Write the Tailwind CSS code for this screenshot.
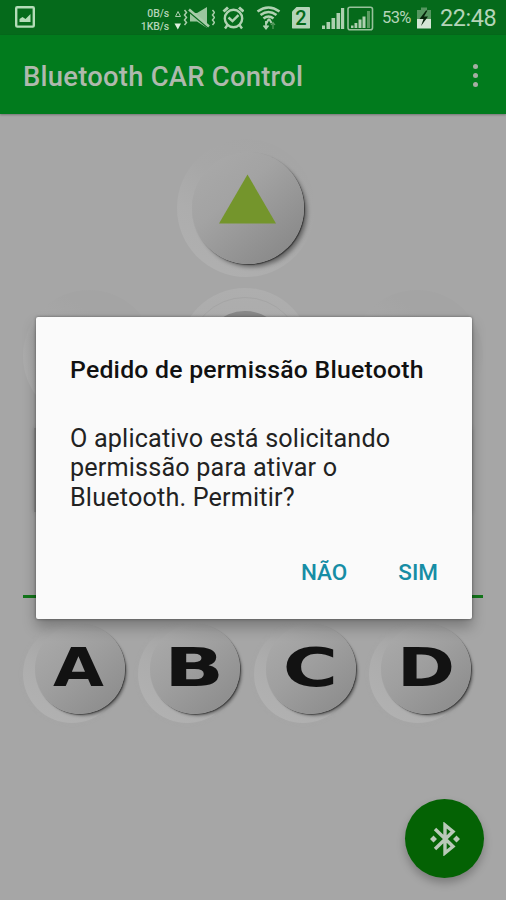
<!DOCTYPE html>
<html lang="pt-BR">
<head>
<meta charset="utf-8">
<meta name="viewport" content="width=device-width, initial-scale=1">
<title>Bluetooth CAR Control</title>
<script src="https://cdn.jsdelivr.net/npm/@tailwindcss/browser@4"></script>
</head>
<body class="bg-[#a6a6a6] font-[Roboto,'Noto_Sans',sans-serif]">
<div class="relative flex h-[900px] w-[506px] flex-col overflow-hidden bg-[#a6a6a6]">

  <!-- Status bar -->
  <header class="flex h-[35px] shrink-0 items-center bg-[#056a1b] text-[#b4d4b8]">
    <svg class="mb-[1px] ml-[15px] h-[22px] w-[20px] shrink-0" viewBox="0 0 20 22" fill="none" stroke="#b4dcb8"><rect x="1.2" y="1.2" width="17.6" height="19.400" rx="1" stroke-width="2.400"/><path d="M4.500 16v-3l3-2 3 2 5-5v8z" fill="#b4dcb8" stroke="none"/></svg>
    <div class="ml-[101px] w-[33px] shrink-0 pt-[4px] text-right text-[10.5px] leading-[13px] font-medium whitespace-nowrap tracking-[-0.1px]"><div>0B/s</div><div>1KB/s</div></div>
    <svg class="ml-[4px] h-[30px] w-[42px] shrink-0" viewBox="173 3 42 30" fill="none" stroke="#a8ccaa">
      <path d="M175.500 16.500l2.500-5 2.500 5z" stroke-width="1"/><path d="M174.500 23.500h6.500l-3.200 6z" fill="#e0f0e0" stroke="none"/>
      <path d="M184.500 10l2 2.500-2 2.500 2 2.500-2 2.500 2 2.500-2 2.500" stroke-width="1.500"/><path d="M212.500 10l2 2.500-2 2.500 2 2.500-2 2.500 2 2.500-2 2.500" stroke-width="1.500"/>
      <path d="M190 13h7l10-6v21l-10-6.500h-7z" fill="#9bc69f" stroke="none"/><path d="M189 11.500l19 16" stroke="#056a1b" stroke-width="2"/><path d="M189 9.500l20 17" stroke-width="2.600"/>
    </svg>
    <svg class="ml-[7px] h-[24px] w-[22px] shrink-0" viewBox="222 5 22 24" fill="none" stroke="#b0d2b2" stroke-width="2.400"><circle cx="233.500" cy="17.500" r="8.700"/><path d="M228.500 16.500l4 3.700 6-6"/><path d="M223.500 10.500l4.500-4M243.500 10.500l-4.500-4" stroke-width="3"/><path d="M227.500 24l-2.500 3.500M239.500 24l2.500 3.500"/></svg>
    <svg class="ml-[12px] h-[26px] w-[25px] shrink-0" viewBox="256 4 25 26" fill="none" stroke="#b0d2b2" stroke-width="2.600"><path d="M257.500 10.500q11-8 22 0M260.500 14q8-6 16 0M263.500 17.500q5-4 10 0"/><path d="M266 23l2.500-4.500h1l2 3.500" stroke-width="2"/><path d="M266 20v7M263.500 24.500l2.500 3 2.500-3" stroke-width="1.800"/><path d="M273 28v-6M271 24l2-2.500 2 2.500" stroke="#5b9d62" stroke-width="1.200"/></svg>
    <div class="ml-[11px] flex h-[22px] w-[18px] shrink-0 items-center justify-center rounded-[1px] bg-[#b4d4b8] text-[20px] font-medium text-[#056a1b] [clip-path:polygon(5px_0,100%_0,100%_100%,0_100%,0_5px)]">2</div>
    <svg class="ml-[11px] h-[26px] w-[53px] shrink-0" viewBox="321 4 53 26" fill="#aed0b0"><path d="M322 24.500h3v3.500h-3zM326.500 21h3.600v7h-3.600zM331.500 17h3.600v11h-3.600zM336.500 12h3.600v16h-3.600zM341 7h3.200v21H341z"/><rect x="348" y="6.200" width="24.500" height="22.500" rx="2" fill="none" stroke="#98c29c" stroke-width="1.600"/><path d="M351 24.500h2.500v2.500H351zM354.500 22h2.800v5h-2.800zM358.500 18.500h3V27h-3zM362.500 15.500h3V27h-3z"/><path d="M367 10h3v17h-3z" fill="#5a9c61"/></svg>
    <div class="ml-[8px] w-[32px] shrink-0 pt-[2px] text-[16.500px] tracking-[-0.6px]">53%</div>
    <svg class="ml-[3px] h-[22px] w-[14px] shrink-0" viewBox="417 6 14 22"><path d="M417 9h4V6.500h6V9h4v9h-14z" fill="#559760"/><path d="M417 18h14v9.500h-14z" fill="#d5e6d6"/><path d="M426 9.500l-6.500 8.500h4l-2.500 7 7-9.500h-4l3.500-6z" fill="#06240b"/></svg>
    <div class="ml-[9px] shrink-0 pt-[2px] text-[23.400px] leading-none tracking-[-0.4px]">22:48</div>
  </header>

  <!-- App bar -->
  <div class="flex h-[79px] shrink-0 items-center justify-between bg-[#017b1d] pl-[23px] shadow-[0_1px_2px_rgba(0,0,0,.3)]">
    <h1 class="pt-[7px] text-[27.400px] font-medium tracking-[0.250px] whitespace-nowrap text-[#afb9ad]">Bluetooth CAR Control</h1>
    <div class="mr-[28px] flex flex-col gap-[4px] pt-[2px]"><i class="size-[5px] rounded-full bg-[#a6aea4]"></i><i class="size-[5px] rounded-full bg-[#a6aea4]"></i><i class="size-[5px] rounded-full bg-[#a6aea4]"></i></div>
  </div>

  <!-- Controls -->
  <main class="flex flex-col pt-[25px]">
    <div class="ml-[177px] flex size-[138px] items-center rounded-full bg-[linear-gradient(35deg,#b1b1b1_0%,#adadad_32%,#a7a7a7_55%,#a4a4a4_100%)] pl-[15px]">
      <div class="flex size-[112px] items-center justify-center rounded-full bg-[linear-gradient(140deg,#a9a9a9_8%,#a3a3a3_38%,#868686_95%)] shadow-[1px_1px_1px_rgba(0,0,0,.45),4px_4px_4px_-1px_rgba(0,0,0,.4)]">
        <svg class="mb-[18px] ml-[-1px] h-[50px] w-[57px]" viewBox="0 0 58 50"><path d="M29 0l29 50H0z" fill="#74952c"/></svg>
      </div>
    </div>
    <div class="mt-[11px] flex h-[140px] items-start justify-between px-[23px]">
      <div class="mt-[2px] size-[132px] rounded-full bg-[linear-gradient(35deg,#b0b0b0,#a4a4a4_70%)]"></div>
      <div class="mr-[16px] flex size-[132px] items-center justify-center rounded-full bg-[linear-gradient(180deg,#aeaeae,#a6a6a6)]"><div class="flex size-[114px] items-center justify-center rounded-full border border-[#a5a5a5]"><div class="size-[86px] rounded-full bg-[#898989]"></div></div></div>
      <div class="mt-[2px] size-[132px] rounded-full bg-[linear-gradient(35deg,#b0b0b0,#a4a4a4_70%)]"></div>
    </div>
    <div class="mx-[34px] h-[84px] bg-[#8d8d8d] shadow-[0_0_5px_rgba(0,0,0,.15)]"></div>
    <div class="mx-[23px] mt-[83px] h-[3px] bg-[#12761a]"></div>
    <div class="mt-[27px] ml-[23px] flex gap-[17.300px]">
      <div class="flex size-[98px] items-center justify-end rounded-full bg-[linear-gradient(35deg,#b3b3b3_0%,#adadad_40%,#a6a6a6_62%)] pb-[11px] shadow-[0_0_4px_#aaaaaa40]"><div class="mr-[-4px] flex size-[90px] items-center justify-center rounded-full bg-[linear-gradient(140deg,#a9a9a9_10%,#9f9f9f_45%,#8b8b8b_95%)] shadow-[1px_1px_1px_rgba(0,0,0,.4),3px_3px_3px_-1px_rgba(0,0,0,.35)]"><span class="mb-[2px] ml-[-3px] inline-block scale-x-[1.240] font-['DejaVu_Sans',sans-serif] text-[53px] leading-none font-bold text-[#121212]">A</span></div></div>
      <div class="flex size-[98px] items-center justify-end rounded-full bg-[linear-gradient(35deg,#b3b3b3_0%,#adadad_40%,#a6a6a6_62%)] pb-[11px] shadow-[0_0_4px_#aaaaaa40]"><div class="mr-[-4px] flex size-[90px] items-center justify-center rounded-full bg-[linear-gradient(140deg,#a9a9a9_10%,#9f9f9f_45%,#8b8b8b_95%)] shadow-[1px_1px_1px_rgba(0,0,0,.4),3px_3px_3px_-1px_rgba(0,0,0,.35)]"><span class="mb-[2px] ml-[-3px] inline-block scale-x-[1.480] font-['DejaVu_Sans',sans-serif] text-[53px] leading-none font-bold text-[#121212]">B</span></div></div>
      <div class="flex size-[98px] items-center justify-end rounded-full bg-[linear-gradient(35deg,#b3b3b3_0%,#adadad_40%,#a6a6a6_62%)] pb-[11px] shadow-[0_0_4px_#aaaaaa40]"><div class="mr-[-4px] flex size-[90px] items-center justify-center rounded-full bg-[linear-gradient(140deg,#a9a9a9_10%,#9f9f9f_45%,#8b8b8b_95%)] shadow-[1px_1px_1px_rgba(0,0,0,.4),3px_3px_3px_-1px_rgba(0,0,0,.35)]"><span class="mb-[2px] inline-block scale-x-[1.420] font-['DejaVu_Sans',sans-serif] text-[53px] leading-none font-bold text-[#121212]">C</span></div></div>
      <div class="flex size-[98px] items-center justify-end rounded-full bg-[linear-gradient(35deg,#b3b3b3_0%,#adadad_40%,#a6a6a6_62%)] pb-[11px] shadow-[0_0_4px_#aaaaaa40]"><div class="mr-[-4px] flex size-[90px] items-center justify-center rounded-full bg-[linear-gradient(140deg,#a9a9a9_10%,#9f9f9f_45%,#8b8b8b_95%)] shadow-[1px_1px_1px_rgba(0,0,0,.4),3px_3px_3px_-1px_rgba(0,0,0,.35)]"><span class="mb-[2px] inline-block scale-x-[1.320] font-['DejaVu_Sans',sans-serif] text-[53px] leading-none font-bold text-[#121212]">D</span></div></div>
    </div>
  </main>

  <!-- Floating action button -->
  <button aria-label="Bluetooth" class="absolute top-[799px] left-[405px] flex size-[79px] items-center justify-center rounded-full bg-[#046204] shadow-[0_5px_8px_rgba(0,0,0,.25)]">
    <svg class="h-[34px] w-[30px]" viewBox="0 0 30 34" fill="none" stroke="#b9c9b8" stroke-width="3.400"><path d="M5 7l18 17.500-8 6.500V3l8 6.500L5 27"/><path d="M3.500 13.500l3.500 3.500-3.500 3.500L0 17zM26.500 13.500l3.500 3.500-3.500 3.500-3.500-3.500z" fill="#b9c9b8" stroke="none"/></svg>
  </button>

  <!-- Permission dialog -->
  <div role="dialog" class="absolute top-[317px] left-[36px] flex h-[302px] w-[436px] flex-col rounded-[2px] bg-[#fafafa] px-[34px] shadow-[0_0_3px_rgba(0,0,0,.45),0_8px_14px_rgba(0,0,0,.27)]">
    <h2 class="mt-[38px] text-[24.800px] leading-[30px] font-medium tracking-[0.230px] whitespace-nowrap text-[#111]">Pedido de permissão Bluetooth</h2>
    <p class="mt-[38.500px] text-[25.200px] leading-[29.500px] tracking-[0.170px] whitespace-nowrap text-[#222]">O aplicativo está solicitando<br>permissão para ativar o<br>Bluetooth. Permitir?</p>
    <div class="mt-[44.500px] flex justify-end gap-[51px] text-[22.500px] leading-[30px] font-medium text-[#168da5]"><button>NÃO</button><button>SIM</button></div>
  </div>
</div>
</body>
</html>
